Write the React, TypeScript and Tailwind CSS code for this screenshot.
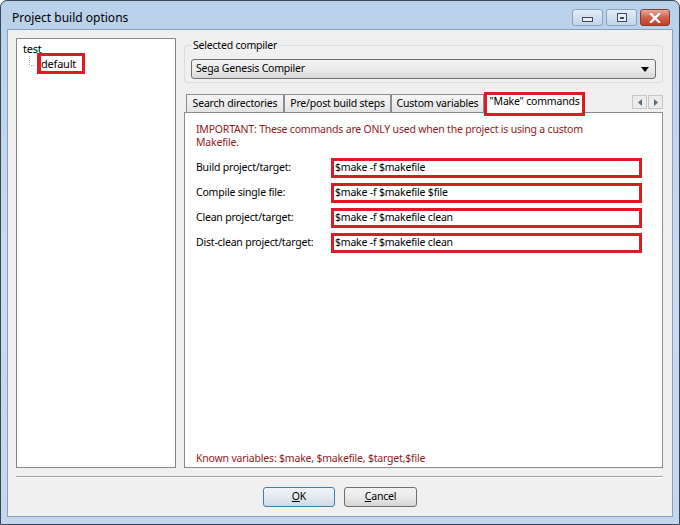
import React from 'react';

const RED = 'border-[#dc1c24]';

const TitleButton: React.FC<{ kind: 'min' | 'max' | 'close' }> = ({ kind }) => {
    if (kind === 'close') {
        return (
            <div className="w-[30px] h-[17px] rounded-[3px] border border-[#8a3b30] bg-gradient-to-b from-[#e9a99b] via-[#d0604a] to-[#c13f25] flex items-center justify-center">
                <svg width="12" height="10" viewBox="0 0 12 10">
                    <path d="M2 1 L10 9 M10 1 L2 9" stroke="#ffffff" strokeWidth="2.4" strokeLinecap="square" />
                </svg>
            </div>
        );
    }
    return (
        <div className="w-[31px] h-[17px] rounded-[3px] border border-[#8aa1bb] bg-gradient-to-b from-[#e6eef8] via-[#d1dff0] to-[#c3d5ec] flex items-center justify-center">
            {kind === 'min' ? (
                <div className="w-[11px] h-[5px] mt-[4px] border border-[#3f4a57] bg-[#e8eef5]" />
            ) : (
                <div className="w-[10px] h-[9px] border border-[#3f4a57] bg-[#e8eef5] flex items-center justify-center">
                    <div className="w-[4px] h-[2px] border-t-2 border-[#3f4a57]" />
                </div>
            )}
        </div>
    );
};

const Tab: React.FC<{ label: string; w: string; active?: boolean }> = ({ label, w, active }) => (
    <div
        className={
            active
                ? `relative ${w} h-[21px] border border-b-0 border-[#898c95] bg-white flex items-center justify-center -mb-[1px] z-10`
                : `${w} h-[18px] border border-b-0 border-[#898c95] bg-gradient-to-b from-[#f6f6f6] to-[#e3e3e3] flex items-center justify-center`
        }
    >
        <span className={active ? '-mt-[3px]' : ''}>{label}</span>
        {active && <div className={`absolute -left-[1px] -right-[1px] -top-[1px] -bottom-[3px] border-[3px] ${RED}`} />}
    </div>
);

const CommandRow: React.FC<{ label: string; value: string }> = ({ label, value }) => (
    <div className="flex items-center h-[25px]">
        <div className="w-[135px]">{label}</div>
        <div className={`w-[311px] h-[20px] border-[3px] ${RED} bg-white flex items-center pl-[1px]`}>{value}</div>
    </div>
);

const App: React.FC = () => {
    return (
        <div
            className="w-[680px] h-[525px] flex flex-col rounded-t-[7px] border border-[#3a4656] bg-gradient-to-b from-[#b9d1ea] via-[#c7dbf1] to-[#c3d8ef] text-[10.5px] tracking-[-0.2px] text-black"
            style={{ fontFamily: '"Segoe UI", "Noto Sans", sans-serif' }}
        >
            {/* title bar */}
            <div className="h-[28px] flex items-center pl-[11px] pr-[9px]">
                <div className="text-[12px] tracking-normal text-black mt-[5px]">Project build options</div>
                <div className="ml-auto flex items-start gap-[3px] self-start mt-[8px]">
                    <TitleButton kind="min" />
                    <TitleButton kind="max" />
                    <TitleButton kind="close" />
                </div>
            </div>

            {/* client area */}
            <div className="mx-[6px] mb-[7px] flex-1 border border-[#8aa0b8] bg-[#f0f0f0] flex flex-col pt-[8px] pl-[8px] pr-[9px]">
                <div className="flex gap-[8px] h-[430px]">
                    {/* tree */}
                    <div className="w-[160px] h-full border border-[#828790] bg-white pl-[6px] pt-[2px] leading-[16px] text-[11px]">
                        <div>test</div>
                        <div className="flex items-start">
                            <svg width="8" height="14" className="ml-[6px] mt-[-1px]">
                                <path d="M0.5 0 V9 M2 9.5 H6" stroke="#a0a0a0" strokeDasharray="1 1" />
                            </svg>
                            <div className={`mt-[-4px] h-[21px] border-[3px] border-l-[4px] ${RED} pl-[0px] pr-[6px] flex items-center`}>
                                default
                            </div>
                        </div>
                    </div>

                    {/* right column */}
                    <div className="w-[479px] flex flex-col">
                        <fieldset className="border border-[#d5dfe5] rounded-[3px] px-[6px] pt-[7px] pb-[3px]">
                            <legend className="ml-[1px] px-[1px] leading-[14px]">Selected compiler</legend>
                            <div className="h-[20px] rounded-[3px] border border-[#707070] bg-gradient-to-b from-[#f2f2f2] via-[#ebebeb] to-[#d8d8d8] flex items-center pl-[4px] pr-[6px]">
                                <span>Sega Genesis Compiler</span>
                                <svg width="8" height="5" viewBox="0 0 8 5" className="ml-auto">
                                    <path d="M0 0 H8 L4 5 Z" fill="#000" />
                                </svg>
                            </div>
                        </fieldset>

                        <div className="mt-[8px] flex items-end pl-[2px] h-[21px]">
                            <Tab label="Search directories" w="w-[98px]" />
                            <Tab label="Pre/post build steps" w="w-[107px]" />
                            <Tab label="Custom variables" w="w-[93px]" />
                            <Tab label={'"Make" commands'} w="w-[101px]" active />
                            <div className="ml-auto self-start mt-[4px] flex gap-[1px]">
                                <div className="w-[15px] h-[14px] border border-[#c6c6c6] bg-[#ececec] flex items-center justify-center">
                                    <svg width="4" height="7" viewBox="0 0 4 7"><path d="M4 0 V7 L0 3.5 Z" fill="#5a6b8c" /></svg>
                                </div>
                                <div className="w-[15px] h-[14px] border border-[#c6c6c6] bg-[#ececec] flex items-center justify-center">
                                    <svg width="4" height="7" viewBox="0 0 4 7"><path d="M0 0 V7 L4 3.5 Z" fill="#5a6b8c" /></svg>
                                </div>
                            </div>
                        </div>

                        <div className="flex-1 border border-[#898c95] bg-white flex flex-col pl-[11px] pt-[10px] pb-[2px]">
                            <div className="text-[#921a1a] leading-[13px] w-[440px]">
                                <div className="whitespace-nowrap">IMPORTANT: These commands are ONLY used when the project is using a custom</div>
                                <div>Makefile.</div>
                            </div>
                            <div className="mt-[6px] flex flex-col">
                                <CommandRow label="Build project/target:" value="$make -f $makefile" />
                                <CommandRow label="Compile single file:" value="$make -f $makefile $file" />
                                <CommandRow label="Clean project/target:" value="$make -f $makefile clean" />
                                <CommandRow label="Dist-clean project/target:" value="$make -f $makefile clean" />
                            </div>
                            <div className="mt-auto text-[#921a1a] leading-[13px]">
                                Known variables: $make, $makefile, $target,$file
                            </div>
                        </div>
                    </div>
                </div>

                <div className="mt-[8px] border-t border-b border-t-[#a0a0a0] border-b-white" />

                <div className="mt-[9px] flex justify-center gap-[9px] pl-[1px]">
                    <button className="w-[72px] h-[20px] rounded-[3px] border border-[#3c7fb1] bg-gradient-to-b from-[#f0f4f8] via-[#e4eaf0] to-[#d0d9e2] flex items-center justify-center">
                        <span><span className="underline">O</span>K</span>
                    </button>
                    <button className="w-[73px] h-[20px] rounded-[3px] border border-[#707070] bg-gradient-to-b from-[#f2f2f2] via-[#ebebeb] to-[#d5d5d5] flex items-center justify-center">
                        <span><span className="underline">C</span>ancel</span>
                    </button>
                </div>
            </div>
        </div>
    );
};

export default App;
